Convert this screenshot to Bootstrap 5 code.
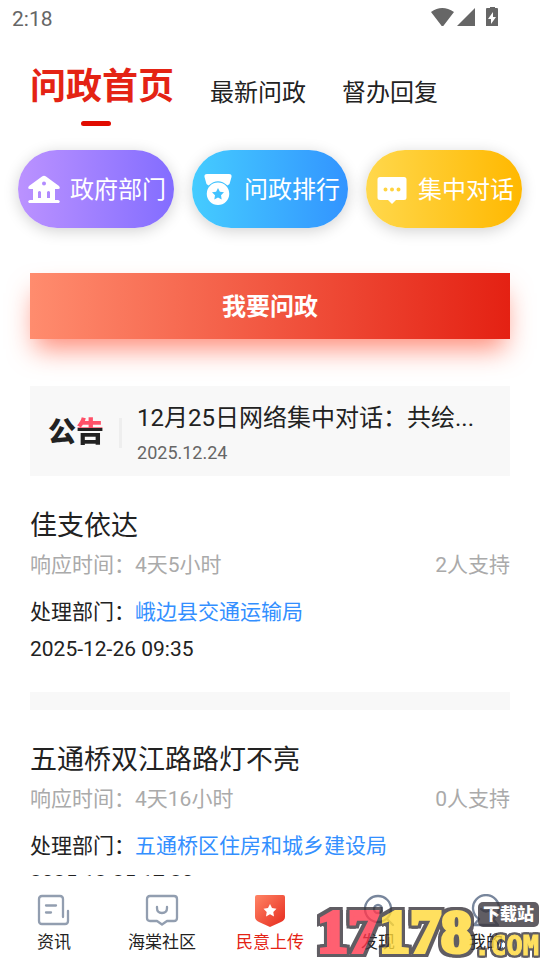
<!DOCTYPE html>
<html lang="zh-CN">
<head>
<meta charset="utf-8">
<meta name="viewport" content="width=device-width, initial-scale=1">
<title>问政首页</title>
<link rel="stylesheet" href="https://cdn.jsdelivr.net/npm/bootstrap@5.3.0/dist/css/bootstrap.min.css">
<style>
body{font-family:Roboto,"Noto Sans CJK SC",sans-serif;color:#222;background:#fff}
a{text-decoration:none}
.status{height:36px;padding:0 42px 0 12px;color:#666;font-size:21px;line-height:38px}
.tabs{padding:24px 30px 0;gap:36px;line-height:36px}
.tabs a{color:#222;font-size:24px;padding-top:15px}
.tabs a.active{color:#e42314;font-size:36px;font-weight:700;line-height:54px;padding-top:0}
.tabs a.active::after{content:"";display:block;width:30px;height:5px;border-radius:3px;background:#e10b00;margin:7px 0 0 51px}
.pills{padding:0 18px;gap:18px;margin-top:24px}
.pill{height:78px;border-radius:39px;color:#fff;font-size:24px;padding:1px 8px 0;gap:8px;box-shadow:0 3px 15px rgba(0,0,0,.18);white-space:nowrap}
.violet{background:linear-gradient(90deg,#bb92ff,#836dff)}
.azure{background:linear-gradient(90deg,#45ccff,#3294ff)}
.amber{background:linear-gradient(90deg,#ffd84c,#ffb800)}
.ask{height:66px;margin-top:45px;padding-top:3px;border:0;color:#fff;font-size:24px;font-weight:700;background:linear-gradient(90deg,#ff8c6e,#e42113);box-shadow:0 15px 27px -5px rgba(255,80,50,.65)}
.inset{padding:0 30px}
.notice{height:90px;margin-top:47px;padding:4px 18px 0;background:#f8f8f8;color:#222}
.notice-logo{font-size:28px;font-weight:900;line-height:30px;color:#222}
.notice-logo span{background:linear-gradient(#ff5068 0 12px,#222 12px);-webkit-background-clip:text;background-clip:text;color:transparent}
.rule{width:3px;height:30px;margin:0 15px;background:#eee}
.notice-title{font-size:24px;line-height:36px}
.notice-date{font-size:18px;line-height:27px;color:#666;margin-top:3px}
.issue{padding-top:31px;font-size:21px;line-height:30px}
.issue h2{font-size:27px;font-weight:400;line-height:38px;margin:0 0 5px}
.meta{color:#aaa}
.dept{margin-top:17px}
.dept a{color:#338fff}
.stamp{margin-top:7px}
.divider{height:18px;margin-top:28px;background:#f8f8f8}
.dock{height:84px;padding-top:18px;background:#fff;z-index:1}
.dock a{color:#222;font-size:17px;line-height:24px;flex:1 1 0;gap:2px}
.dock a.active{color:#e42314}
.stamp-mark{right:0;bottom:0;width:224px;height:64px;z-index:2;opacity:.8;pointer-events:none}
.digits{left:1px;bottom:0;font:700 62px/58px "Liberation Serif",serif;filter:drop-shadow(3px 0 0 #39353d) drop-shadow(-3px 0 0 #39353d) drop-shadow(0 3px 0 #39353d) drop-shadow(0 -3px 0 #39353d)}
.digits .r{color:#ff394e;-webkit-text-stroke:4px #ff394e}
.digits .y{color:#ffd938;-webkit-text-stroke:4px #ffd938}
.site{right:1px;top:6px;width:61px;height:25px;border-radius:5px;background:#39353d;color:#fff;font-size:17px;font-weight:900;line-height:24px}
.com{right:1px;bottom:0;font:700 27px/29px "DejaVu Sans Mono",monospace;color:#ffd938;-webkit-text-stroke:1px #ffd938;filter:drop-shadow(2px 0 0 #39353d) drop-shadow(-2px 0 0 #39353d) drop-shadow(0 2px 0 #39353d) drop-shadow(0 -2px 0 #39353d)}
</style>
</head>
<body>
<div class="d-flex flex-column vh-100 overflow-hidden position-relative">
  <div class="status d-flex justify-content-between flex-shrink-0">
    <span>2:18</span>
    <svg width="68" height="22" viewBox="0 0 68 22" class="mt-1 flex-shrink-0" fill="#666" aria-hidden="true"><path d="M1 8Q12-0 24 8L12.500 23ZM45 4v19H26ZM60 4V3h5v1h2q1 0 1 1v17q0 1-1 1H57q-1 0-1-1V5q0-1 1-1z"/><path d="M63 8l-5 7h3v5l5-7h-3z" fill="#fff"/></svg>
  </div>
  <main class="flex-grow-1 overflow-hidden">
    <nav class="tabs d-flex align-items-start text-nowrap">
      <a class="active" href="#" aria-current="page">问政首页</a><a href="#">最新问政</a><a href="#">督办回复</a>
    </nav>
    <div class="pills d-flex">
      <a href="#" class="pill violet d-flex align-items-center justify-content-center flex-fill"><svg width="36" height="36" viewBox="0 0 36 36" fill="#fff" aria-hidden="true"><path fill-rule="evenodd" d="M16 4.500q2-1.500 4 0L33 14q2 3-1 3h-3v11h3q3 1 1 3H3q-2-2 1-3h3V17H4q-3 0-1-3zM18 9.500a2 2 0 100 4 2 2 0 000-4M12 20v6h3v-6q-1.500-2-3 0m9 0v6h3v-6q-1.500-2-3 0"/></svg><span>政府部门</span></a>
      <a href="#" class="pill azure d-flex align-items-center justify-content-center flex-fill"><svg width="36" height="36" viewBox="0 0 36 36" fill="#fff" aria-hidden="true"><path d="M7 2h22q3 0 2.500 3l-2 7-2 1.500Q18 5 8.500 13.500l-2-1.500-2-7Q4 2 7 2"/><path fill-rule="evenodd" d="M18 10.500a11.200 11.200 0 100 22.500 11.200 11.200 0 000-22.500m0 5.500l1.900 3.700 4.100.6-3 3 .7 4.200-3.700-2-3.700 2 .7-4.200-3-3 4.100-.6z"/></svg><span>问政排行</span></a>
      <a href="#" class="pill amber d-flex align-items-center justify-content-center flex-fill"><svg width="36" height="36" viewBox="0 0 36 36" fill="#fff" aria-hidden="true"><path fill-rule="evenodd" d="M6 5h24q2.500 0 2.500 2.500v18Q32.500 28 30 28h-8l-4 4-4-4H6q-2.500 0-2.500-2.500v-18Q3.500 5 6 5m5.500 10.500a2 2 0 100 4 2 2 0 000-4m6.500 0a2 2 0 100 4 2 2 0 000-4m6.500 0a2 2 0 100 4 2 2 0 000-4"/></svg><span>集中对话</span></a>
    </div>
    <div class="inset">
      <button type="button" class="ask w-100">我要问政</button>
      <a href="#" class="notice d-flex align-items-center">
        <div class="notice-logo text-nowrap">公<span>告</span></div>
        <div class="rule flex-shrink-0"></div>
        <div class="flex-grow-1 overflow-hidden">
          <div class="notice-title text-truncate">12月25日网络集中对话：共绘...</div>
          <div class="notice-date">2025.12.24</div>
        </div>
      </a>
      <article class="issue">
        <h2>佳支依达</h2>
        <div class="meta d-flex justify-content-between"><span>响应时间：4天5小时</span><span>2人支持</span></div>
        <div class="dept">处理部门：<a href="#">峨边县交通运输局</a></div>
        <div class="stamp">2025-12-26 09:35</div>
        <div class="divider"></div>
      </article>
      <article class="issue">
        <h2>五通桥双江路路灯不亮</h2>
        <div class="meta d-flex justify-content-between"><span>响应时间：4天16小时</span><span>0人支持</span></div>
        <div class="dept">处理部门：<a href="#">五通桥区住房和城乡建设局</a></div>
        <div class="stamp">2025-12-25 17:20</div>
      </article>
    </div>
  </main>
  <nav class="dock d-flex flex-shrink-0 text-center">
    <a href="#" class="d-flex flex-column align-items-center"><svg width="34" height="34" viewBox="0 0 34 34" fill="none" stroke="#929eb0" stroke-width="2.300" stroke-linecap="round" aria-hidden="true"><path d="M26 23V5q0-3-3-3H5Q2 2 2 5v22q0 3 3 3h23q3 0 3-3V17M9 11.500h10M9 18.500h5"/></svg><span>资讯</span></a>
    <a href="#" class="d-flex flex-column align-items-center"><svg width="34" height="34" viewBox="0 0 34 34" fill="none" stroke="#929eb0" stroke-width="2.300" stroke-linecap="round" stroke-linejoin="round" aria-hidden="true"><path d="M5 2h24q3 0 3 3v19q0 3-3 3h-7l-5 3.500-5-3.500H5q-3 0-3-3V5q0-3 3-3M12 13v1q0 5 5 5t5-5v-1"/></svg><span>海棠社区</span></a>
    <a href="#" class="active d-flex flex-column align-items-center" aria-current="page"><svg width="34" height="34" viewBox="0 0 34 34" aria-hidden="true"><defs><linearGradient id="shield" x2="1" y2="1"><stop stop-color="#ff8465"/><stop offset="1" stop-color="#e62a1d"/></linearGradient></defs><path d="M4 1h26q2 0 2 2v20q0 3-4 5l-11 5-11-5q-4-2-4-5V3q0-2 2-2" fill="url(#shield)"/><path d="M17 10l2 4 4.500.7-3.200 3.200.7 4.500-4-2.100-4 2.100.7-4.500-3.200-3.200L15 14z" fill="#fff"/></svg><span>民意上传</span></a>
    <a href="#" class="d-flex flex-column align-items-center"><svg width="34" height="34" viewBox="0 0 34 34" fill="none" stroke="#78869c" stroke-width="2.300" stroke-linecap="round" aria-hidden="true"><circle cx="17" cy="15" r="13"/><circle cx="17" cy="15" r="4"/><path d="M26 25l6 6"/></svg><span>发现</span></a>
    <a href="#" class="d-flex flex-column align-items-center"><svg width="34" height="34" viewBox="0 0 34 34" fill="none" stroke="#78869c" stroke-width="2.300" stroke-linecap="round" stroke-linejoin="round" aria-hidden="true"><path d="M10 25A13 13 0 1124 25l5 6H5zM12 15q5 5 10 0"/></svg><span>我的</span></a>
  </nav>
  <div class="stamp-mark position-absolute">
    <div class="digits position-absolute"><span class="r">17</span><span class="y">178</span></div>
    <div class="com position-absolute">.COM</div>
    <div class="site position-absolute text-center">下载站</div>
  </div>
</div>
<script src="https://cdn.jsdelivr.net/npm/bootstrap@5.3.0/dist/js/bootstrap.bundle.min.js"></script>
</body>
</html>
